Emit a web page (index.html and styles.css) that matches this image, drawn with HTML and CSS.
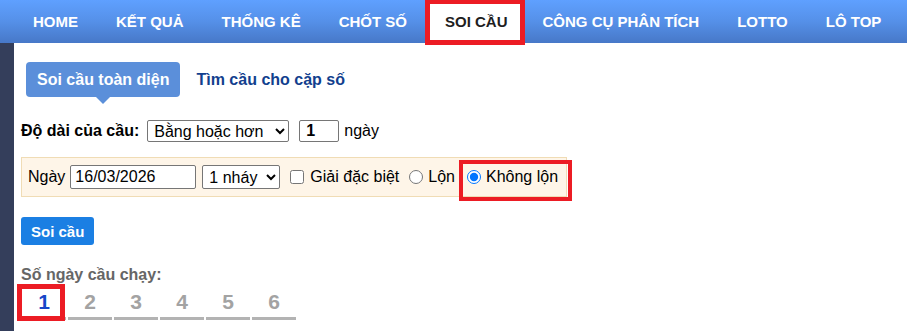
FILE: index.html
```html
<!DOCTYPE html>
<html lang="vi">
<head>
<meta charset="utf-8">
<title>Soi cầu</title>
<link rel="stylesheet" href="styles.css">
</head>
<body>
<header class="topnav">
  <ul class="menu">
    <li><a href="#">HOME</a></li>
    <li><a href="#">KẾT QUẢ</a></li>
    <li><a href="#">THỐNG KÊ</a></li>
    <li><a href="#">CHỐT SỐ</a></li>
    <li class="active"><a href="#">SOI CẦU</a></li>
    <li><a href="#">CÔNG CỤ PHÂN TÍCH</a></li>
    <li><a href="#">LOTTO</a></li>
    <li><a href="#">LÔ TOP</a></li>
  </ul>
</header>
<div class="page">
  <aside class="sidebar"></aside>
  <main class="content">
    <div class="tabs">
      <a class="tab tab-active" href="#">Soi cầu toàn diện</a>
      <a class="tab tab-link" href="#">Tìm cầu cho cặp số</a>
    </div>

    <div class="length-row">
      <b class="length-label">Độ dài của cầu:</b>
      <select class="sel sel-mode"><option>Bằng hoặc hơn</option></select>
      <input class="inp inp-days" type="text" value="1">
      <span class="days-unit">ngày</span>
    </div>

    <div class="filter-box">
      <span class="f-label">Ngày</span>
      <input class="inp inp-date" type="text" value="16/03/2026">
      <select class="sel sel-nhay"><option>1 nháy</option></select>
      <input class="chk" type="checkbox" id="gdb">
      <label class="opt-text opt-gdb" for="gdb">Giải đặc biệt</label>
      <input class="rad rad-lon" type="radio" name="lon" id="lon">
      <label class="opt-text" for="lon">Lộn</label>
      <span class="hl">
        <input class="rad rad-khong" type="radio" name="lon" id="khong" checked>
        <label class="opt-text" for="khong">Không lộn</label>
      </span>
    </div>

    <button class="btn-soi" type="button">Soi cầu</button>

    <div class="days-title">Số ngày cầu chạy:</div>
    <div class="day-tabs">
      <span class="day day-active">1</span>
      <span class="day">2</span>
      <span class="day">3</span>
      <span class="day">4</span>
      <span class="day">5</span>
      <span class="day">6</span>
    </div>
  </main>
</div>
</body>
</html>
```

FILE: styles.css
```css
*, *::before, *::after { box-sizing: border-box; }

html, body {
  margin: 0;
  padding: 0;
  background: #ffffff;
  font-family: "Liberation Sans", Arial, sans-serif;
  font-size: 16px;
  color: #000;
  overflow: hidden;
}

/* ---------- top navigation ---------- */
.topnav {
  height: 43px;
  background: linear-gradient(to bottom, #5fa0ff 0%, #5590e8 50%, #4778c8 100%);
}

.menu {
  display: flex;
  list-style: none;
  margin: 0;
  padding: 0 0 0 14px;
  height: 43px;
}

.menu li {
  padding: 0 19px;
}

.menu a {
  display: block;
  line-height: 43px;
  font-family: "Liberation Sans", Arial, sans-serif;
  font-weight: bold;
  font-size: 15px;
  color: #ffffff;
  text-decoration: none;
  white-space: nowrap;
}

.menu li.active {
  padding: 0 4px;
  position: relative;
  z-index: 1;
}

.menu li.active a {
  margin-top: 4px;
  line-height: 36px;
  padding: 0 12px 0 15px;
  background: #ffffff;
  color: #1e1e1e;
  outline: 5px solid #ec1c24;
}

/* ---------- page ---------- */
.page {
  display: flex;
  height: calc(100vh - 43px);
}

.sidebar {
  width: 14px;
  flex: none;
  background: #343e5b;
}

.content {
  flex: 1;
  padding-left: 7px;
}

/* ---------- tabs ---------- */
.tabs {
  display: flex;
  align-items: center;
  margin-top: 19px;
  height: 35px;
}

.tab {
  font-weight: bold;
  font-size: 16px;
  text-decoration: none;
  white-space: nowrap;
}

.tab-active {
  position: relative;
  margin-left: 5px;
  height: 35px;
  line-height: 35px;
  padding: 0 11px;
  background: #5b8fda;
  color: #ffffff;
  border-radius: 4px;
}

.tab-active::after {
  content: "";
  position: absolute;
  left: 50%;
  bottom: -7px;
  margin-left: -7px;
  border-left: 7px solid transparent;
  border-right: 7px solid transparent;
  border-top: 7px solid #5b8fda;
}

.tab-link {
  margin-left: 16px;
  color: #123f8e;
}

/* ---------- length row ---------- */
.length-row {
  display: flex;
  align-items: center;
  margin-top: 22px;
  height: 24px;
}

.length-label {
  font-weight: bold;
  font-size: 16px;
}

.sel {
  font-family: "Liberation Sans", Arial, sans-serif;
  font-size: 16px;
  color: #000;
  background: #fff;
  border: 1px solid #767676;
  border-radius: 2px;
  padding: 0 2px;
}

.sel-mode {
  margin-left: 8px;
  width: 142px;
  height: 22px;
}

.inp {
  font-family: "Liberation Sans", Arial, sans-serif;
  font-size: 16px;
  color: #000;
  border: 1px solid #767676;
  border-radius: 2px;
  padding: 1px 4px;
  background: #fff;
}

.inp-days {
  margin-left: 10px;
  width: 40px;
  height: 22px;
  font-weight: bold;
  padding: 0 6px;
}

.days-unit {
  margin-left: 5px;
}

/* ---------- filter box ---------- */
.filter-box {
  display: flex;
  align-items: center;
  margin-top: 14px;
  width: 546px;
  height: 40px;
  padding-left: 6px;
  background: #fef5e8;
  border: 1px solid #f0dcb5;
}

.inp-date {
  margin-left: 5px;
  width: 126px;
  height: 24px;
}

.sel-nhay {
  margin-left: 6px;
  width: 78px;
  height: 24px;
}

.chk, .rad {
  width: 14px;
  height: 14px;
  margin: 0;
  flex: none;
}

.chk { margin-left: 10px; }
.rad-lon { margin-left: 10px; }
.rad-khong { margin-left: 0; }

.opt-text {
  margin-left: 5px;
  font-size: 16px;
}

.opt-gdb { margin-left: 6px; }

.hl {
  position: relative;
  display: flex;
  align-items: center;
  margin-left: 12px;
  height: 20px;
}

.hl::after {
  content: "";
  position: absolute;
  left: -8px;
  right: -14px;
  top: -7px;
  bottom: -14px;
  border: 4px solid #ec1c24;
  pointer-events: none;
}

/* ---------- button ---------- */
.btn-soi {
  display: block;
  margin-top: 20px;
  height: 28px;
  padding: 0 10px;
  background: #1b7fe3;
  color: #ffffff;
  border: none;
  border-radius: 3px;
  font-family: "Liberation Sans", Arial, sans-serif;
  font-weight: bold;
  font-size: 15px;
}

/* ---------- run days ---------- */
.days-title {
  margin-top: 21px;
  line-height: 18px;
  font-weight: bold;
  font-size: 16px;
  color: #666666;
}

.day-tabs {
  display: flex;
  margin-left: 1px;
}

.day {
  position: relative;
  width: 44px;
  height: 36px;
  margin-right: 2px;
  padding-top: 3px;
  line-height: 30px;
  text-align: center;
  font-weight: bold;
  font-size: 21px;
  color: #a3a3a3;
  border-bottom: 3px solid #b3b3b3;
}

.day-active {
  color: #1747c8;
}

.day-active::after {
  content: "";
  position: absolute;
  left: -5px;
  top: 0;
  width: 48px;
  height: 37px;
  border: 5px solid #ec1c24;
  pointer-events: none;
}
```
